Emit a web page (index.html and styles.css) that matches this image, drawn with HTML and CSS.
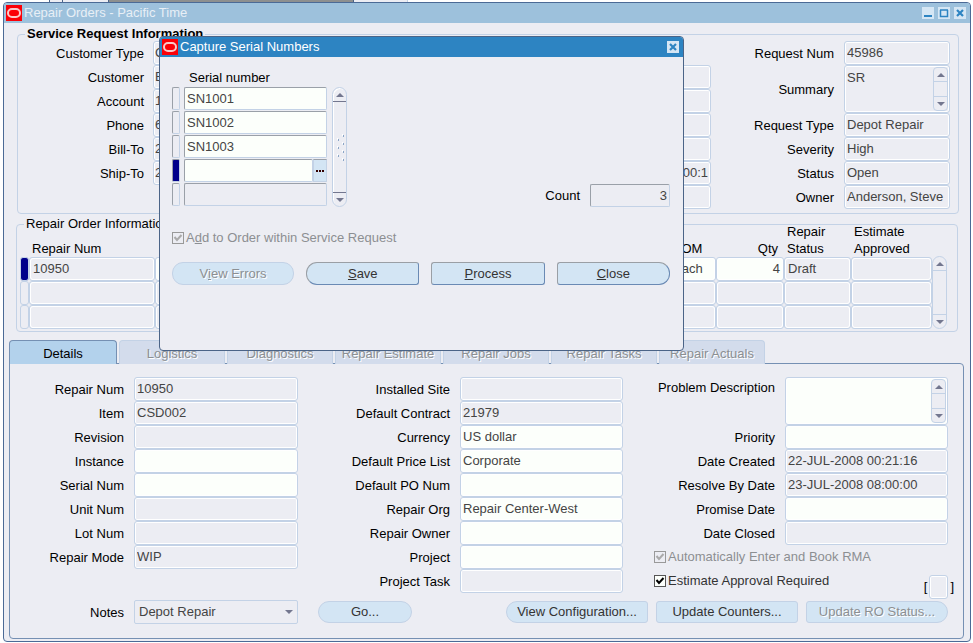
FILE: index.html
```html
<!DOCTYPE html>
<html lang="en">
<head>
    <meta charset="UTF-8">
    <meta name="viewport" content="width=device-width, initial-scale=1.0">
    <title>Repair Orders</title>
    <link rel="stylesheet" href="styles.css">
</head>
<body>
    <div class="backdrop"><span></span><span></span><span></span><span></span></div>

    <main class="window">
        <header class="titlebar">
            <svg class="logo" viewBox="0 0 16 16"><rect width="16" height="16" fill="#fb0007"/><rect x="2" y="4" width="12" height="8" rx="4" fill="none" stroke="#fbc9c9" stroke-width="2"/></svg>
            <h1>Repair Orders - Pacific Time</h1>
            <button class="win-btn" aria-label="Minimize"><svg viewBox="0 0 12 12"><path d="M2 9h8" stroke="#2d84c2" stroke-width="2"/></svg></button>
            <button class="win-btn" aria-label="Maximize"><svg viewBox="0 0 12 12"><path d="M2.500 3v6.500h7V3M2 3h8" fill="none" stroke="#2d84c2" stroke-width="1.500"/></svg></button>
            <button class="win-btn" aria-label="Close window"><svg viewBox="0 0 12 12"><path d="M3 3l6 6M9 3l-6 6" stroke="#2d84c2" stroke-width="2.200"/></svg></button>
        </header>

        <!-- Service request -->
        <fieldset class="group request">
            <legend class="bold">Service Request Information</legend>
            <div class="request-left">
                <div class="row"><label for="custType">Customer Type</label><input id="custType" class="field" value="C" readonly></div>
                <div class="row"><label for="customer">Customer</label><input id="customer" class="field" value="E" readonly></div>
                <div class="row"><label for="account">Account</label><input id="account" class="field" value="1" readonly></div>
                <div class="row"><label for="phone">Phone</label><input id="phone" class="field" value="6" readonly></div>
                <div class="row"><label for="billTo">Bill-To</label><input id="billTo" class="field" value="2" readonly></div>
                <div class="row"><label for="shipTo">Ship-To</label><input id="shipTo" class="field" value="2" readonly></div>
            </div>
            <div class="request-mid">
                <input class="field" aria-label="Contact" readonly>
                <input class="field" aria-label="Contact phone" readonly>
                <input class="field" aria-label="Email" readonly>
                <input class="field" aria-label="Contract" readonly>
                <input class="field num" aria-label="Date" value="00:1" readonly>
                <input class="field" aria-label="Reference" readonly>
            </div>
            <div class="request-right">
                <div class="row"><label for="reqNum">Request Num</label><input id="reqNum" class="field" value="45986" readonly></div>
                <div class="row tall">
                    <label for="summary">Summary</label>
                    <div class="field area">
                        <textarea id="summary" readonly>SR</textarea>
                        <div class="scroll"><button class="up" aria-label="Scroll up"></button><button class="down" aria-label="Scroll down"></button></div>
                    </div>
                </div>
                <div class="row"><label for="reqType">Request Type</label><input id="reqType" class="field" value="Depot Repair" readonly></div>
                <div class="row"><label for="severity">Severity</label><input id="severity" class="field" value="High" readonly></div>
                <div class="row"><label for="status">Status</label><input id="status" class="field" value="Open" readonly></div>
                <div class="row"><label for="owner">Owner</label><input id="owner" class="field" value="Anderson, Steve" readonly></div>
            </div>
        </fieldset>

        <!-- Repair orders table -->
        <fieldset class="group orders">
            <legend>Repair Order Information</legend>
            <div class="orders-body">
                <table>
                    <colgroup><col class="c-mark"><col class="c-num"><col><col class="c-uom"><col class="c-qty"><col class="c-status"><col class="c-appr"></colgroup>
                    <thead>
                        <tr><th></th><th>Repair Num</th><th></th><th>UOM</th><th class="num">Qty</th><th>Repair<br>Status</th><th>Estimate<br>Approved</th></tr>
                    </thead>
                    <tbody>
                        <tr><td class="current"></td><td>10950</td><td class="edit"></td><td class="edit">Each</td><td class="edit num">4</td><td>Draft</td><td></td></tr>
                        <tr><td></td><td></td><td></td><td></td><td></td><td></td><td></td></tr>
                        <tr><td></td><td></td><td></td><td></td><td></td><td></td><td></td></tr>
                    </tbody>
                </table>
                <div class="scroll round"><button class="up" aria-label="Scroll up"></button><button class="down" aria-label="Scroll down"></button></div>
            </div>
        </fieldset>

        <nav class="tabs">
            <button class="tab active">Details</button>
            <button class="tab">Logistics</button>
            <button class="tab">Diagnostics</button>
            <button class="tab">Repair Estimate</button>
            <button class="tab">Repair Jobs</button>
            <button class="tab">Repair Tasks</button>
            <button class="tab">Repair Actuals</button>
        </nav>

        <!-- Details tab -->
        <section class="panel">
            <div class="details">
                <div>
                    <div class="row"><label for="repairNum">Repair Num</label><input id="repairNum" class="field" value="10950" readonly></div>
                    <div class="row"><label for="item">Item</label><input id="item" class="field" value="CSD002" readonly></div>
                    <div class="row"><label for="revision">Revision</label><input id="revision" class="field" readonly></div>
                    <div class="row"><label for="instance">Instance</label><input id="instance" class="field edit"></div>
                    <div class="row"><label for="serialNum">Serial Num</label><input id="serialNum" class="field edit"></div>
                    <div class="row"><label for="unitNum">Unit Num</label><input id="unitNum" class="field" readonly></div>
                    <div class="row"><label for="lotNum">Lot Num</label><input id="lotNum" class="field" readonly></div>
                    <div class="row"><label for="repairMode">Repair Mode</label><input id="repairMode" class="field" value="WIP" readonly></div>
                </div>
                <div>
                    <div class="row"><label for="site">Installed Site</label><input id="site" class="field" readonly></div>
                    <div class="row"><label for="contract">Default Contract</label><input id="contract" class="field" value="21979" readonly></div>
                    <div class="row"><label for="currency">Currency</label><input id="currency" class="field edit" value="US dollar"></div>
                    <div class="row"><label for="priceList">Default Price List</label><input id="priceList" class="field edit" value="Corporate"></div>
                    <div class="row"><label for="poNum">Default PO Num</label><input id="poNum" class="field edit"></div>
                    <div class="row"><label for="repairOrg">Repair Org</label><input id="repairOrg" class="field edit" value="Repair Center-West"></div>
                    <div class="row"><label for="repairOwner">Repair Owner</label><input id="repairOwner" class="field edit"></div>
                    <div class="row"><label for="project">Project</label><input id="project" class="field edit"></div>
                    <div class="row"><label for="projectTask">Project Task</label><input id="projectTask" class="field" readonly></div>
                </div>
                <div>
                    <div class="row tall top">
                        <label for="problem">Problem Description</label>
                        <div class="field area edit">
                            <textarea id="problem"></textarea>
                            <div class="scroll"><button class="up" aria-label="Scroll up"></button><button class="down" aria-label="Scroll down"></button></div>
                        </div>
                    </div>
                    <div class="row"><label for="priority">Priority</label><input id="priority" class="field edit"></div>
                    <div class="row"><label for="created">Date Created</label><input id="created" class="field" value="22-JUL-2008 00:21:16" readonly></div>
                    <div class="row"><label for="resolveBy">Resolve By Date</label><input id="resolveBy" class="field" value="23-JUL-2008 08:00:00" readonly></div>
                    <div class="row"><label for="promise">Promise Date</label><input id="promise" class="field edit"></div>
                    <div class="row"><label for="closed">Date Closed</label><input id="closed" class="field" readonly></div>
                    <div class="checks">
                        <div>
                            <label class="check disabled"><input type="checkbox" checked disabled>Automatically Enter and Book RMA</label>
                            <label class="check"><input type="checkbox" checked>Estimate Approval Required</label>
                        </div>
                        <label class="flex-field">[<input class="field" aria-label="Flexfield" readonly>]</label>
                    </div>
                </div>
            </div>
            <div class="actions">
                <div class="row">
                    <label for="notes">Notes</label>
                    <select id="notes"><option>Depot Repair</option></select>
                </div>
                <button class="btn go">Go...</button>
                <div class="btn-group">
                    <button class="btn first">View Configuration...</button>
                    <button class="btn">Update Counters...</button>
                    <button class="btn last" disabled>Update RO Status...</button>
                </div>
            </div>
        </section>

        <!-- Serial number dialog -->
        <section class="dialog" role="dialog" aria-label="Capture Serial Numbers">
            <header class="titlebar">
                <svg class="logo" viewBox="0 0 16 16"><rect width="16" height="16" fill="#fb0007"/><rect x="2" y="4" width="12" height="8" rx="4" fill="none" stroke="#fbc9c9" stroke-width="2"/></svg>
                <h2>Capture Serial Numbers</h2>
                <button class="win-btn" aria-label="Close dialog"><svg viewBox="0 0 12 12"><path d="M3 3l6 6M9 3l-6 6" stroke="#2d84c2" stroke-width="2.200"/></svg></button>
            </header>
            <div class="dialog-body">
                <div class="serial-title">Serial number</div>
                <div class="serials">
                    <div class="serial-list">
                        <div class="serial"><i></i><input class="inset edit" aria-label="Serial 1" value="SN1001"></div>
                        <div class="serial"><i></i><input class="inset edit" aria-label="Serial 2" value="SN1002"></div>
                        <div class="serial"><i></i><input class="inset edit" aria-label="Serial 3" value="SN1003"></div>
                        <div class="serial"><i class="current"></i><input class="inset edit" aria-label="Serial 4"><button class="lov" aria-label="List of values"><svg viewBox="0 0 8 2"><path d="M0 1h2M3 1h2M6 1h2" stroke="#300" stroke-width="2"/></svg></button></div>
                        <div class="serial"><i></i><input class="inset" aria-label="Serial 5" readonly></div>
                    </div>
                    <div class="scroll round thumb">
                        <button class="up" aria-label="Scroll up"></button>
                        <svg class="grip" viewBox="0 0 8 27"><path d="M6 1h1M1 5h1M6 9h1M1 13h1M6 17h1M1 21h1M6 25h1" stroke="#fff" stroke-width="2"/><path d="M7 2h1M2 6h1M7 10h1M2 14h1M7 18h1M2 22h1M7 26h1" stroke="#8ba5c6" stroke-width="2"/></svg>
                        <button class="down" aria-label="Scroll down"></button>
                    </div>
                    <div class="count"><label for="count">Count</label><input id="count" class="inset num" value="3" readonly></div>
                </div>
                <label class="check disabled"><input type="checkbox" checked disabled><span>A<u>d</u>d to Order within Service Request</span></label>
                <div class="dialog-buttons">
                    <button class="btn first last" disabled>V<u>i</u>ew Errors</button>
                    <button class="btn raised first"><u>S</u>ave</button>
                    <button class="btn raised"><u>P</u>rocess</button>
                    <button class="btn raised last"><u>C</u>lose</button>
                </div>
            </div>
        </section>
    </main>
</body>
</html>
```

FILE: styles.css
```css
* {
    box-sizing: border-box;
}

body {
    margin: 0;
    background-color: #fff;
    font-family: "Liberation Sans", Arial, sans-serif;
    font-size: 13px;
    line-height: 18px;
    color: #000;
}

input, textarea, select, button {
    font: inherit;
    color: #444;
    margin: 0;
    padding: 0;
    min-width: 0;
}

/* Edge of the windows behind this one */
.backdrop {
    display: flex;
    height: 2px;
    padding-left: 49px;
}

.backdrop span {
    border-left: 1px solid #4b6487;
    background-color: #ecedf3;
    width: 13px;
}

.backdrop span:nth-child(2) {
    width: 46px;
}

.backdrop span:nth-child(3) {
    width: 245px;
    background-color: #8d8f8f;
}

.backdrop span:nth-child(4) {
    width: 55px;
    border-right: 1px solid #c3d2e6;
}

.window {
    position: relative;
    margin: 0 2px 0 3px;
    border: 1px solid #4b6a96;
    border-radius: 4px;
    background-color: #ecedf3;
    padding-bottom: 2px;
}

.titlebar {
    display: flex;
    align-items: center;
    height: 20px;
    padding: 0 4px 0 2px;
    gap: 4px;
    background-color: #9dc1dc;
    border-radius: 3px 3px 0 0;
}

.titlebar h1,
.titlebar h2 {
    flex: 1;
    margin: 0 0 0 -2px;
    font-size: 13px;
    font-weight: normal;
    color: #e8eff6;
}

.logo {
    width: 16px;
    height: 16px;
}

.win-btn {
    width: 12px;
    height: 12px;
    border: 0;
    background-color: #d5e6f4;
}

.win-btn svg {
    display: block;
}

/* Groups */
.group {
    margin: 0 11px 0 13px;
    padding: 0;
    min-width: 0;
    border: 1px solid #c3d2e6;
    border-radius: 4px;
}

.group legend {
    margin-left: 7px;
    padding: 0 2px;
    line-height: 14px;
}

.bold {
    font-weight: bold;
}

.request {
    display: flex;
    margin-top: 4px;
    padding: 0 8px 4px 0;
}

.request-left {
    width: 236px;
}

.request-mid {
    flex: 1;
    display: flex;
    flex-direction: column;
    justify-content: flex-end;
    margin-left: 160px;
    padding-top: 24px;
}

.request-right {
    width: 239px;
}

.row {
    display: flex;
    align-items: center;
    height: 24px;
}

.row label {
    flex: 1;
    padding: 2px 10px 0 0;
    text-align: right;
    white-space: nowrap;
}

.tall {
    height: 48px;
}

.top {
    align-items: flex-start;
}

.field {
    width: 163px;
    height: 24px;
    padding: 0 2px 1px;
    border: 1px solid #c3d2e6;
    border-radius: 3px;
    background-color: #ecedf3;
    box-shadow: inset 0 0 0 1px #fff;
}

.request-left .row label {
    padding-right: 9px;
}

.request-left .field {
    width: 101px;
    padding-left: 1px;
}

.request-mid .field {
    width: 100%;
}

.request-right .field {
    width: 106px;
}

.field.edit,
.edit {
    background-color: #fcfffb;
}

.num {
    text-align: right;
}

.area {
    display: flex;
    height: 48px;
    padding: 1px;
}

.area textarea {
    flex: 1;
    width: 0;
    border: 0;
    padding: 2px 1px;
    background: transparent;
    resize: none;
    overflow: hidden;
}

/* Scrollbars */
.scroll {
    display: flex;
    flex-direction: column;
    justify-content: space-between;
    width: 15px;
    border: 1px solid #c3d2e6;
    border-radius: 4px;
    background-color: #ecedf3;
    overflow: hidden;
}

.scroll button {
    display: flex;
    align-items: center;
    justify-content: center;
    height: 14px;
    border: 0;
    background: transparent;
}

.scroll button::before {
    content: "";
    border: 4px solid transparent;
}

.scroll .up {
    border-bottom: 1px solid #c3d2e6;
}

.scroll .down {
    border-top: 1px solid #c3d2e6;
}

.scroll .up::before {
    border-top: 0;
    border-bottom-color: #73778f;
}

.scroll .down::before {
    border-bottom: 0;
    border-top-color: #73778f;
}

.round {
    border-radius: 8px;
}

.thumb {
    align-items: stretch;
    box-shadow: inset 1px 1px 0 #fff;
}

.thumb .up {
    border-bottom-color: #73778f;
}

.thumb .down {
    border-top-color: #73778f;
}

.grip {
    width: 8px;
    height: 27px;
    align-self: center;
}

/* Repair orders */
.orders {
    margin: 3px 12px 0;
    padding: 0 10px 2px 3px;
}

.orders legend {
    margin-left: 4px;
}

.orders-body {
    display: flex;
    align-items: flex-end;
    margin-top: -8px;
}

.orders-body .scroll {
    height: 73px;
}

.orders table {
    flex: 1;
    table-layout: fixed;
    border-collapse: separate;
    border-spacing: 0;
    width: 0;
}

.orders th {
    padding: 0 3px;
    font-weight: normal;
    line-height: 17px;
    text-align: left;
    vertical-align: bottom;
    white-space: nowrap;
}

.orders th.num {
    padding-right: 6px;
    text-align: right;
}

.orders td {
    height: 24px;
    padding: 0 3px;
    border: 1px solid #c3d2e6;
    border-radius: 3px;
    box-shadow: inset 0 0 0 1px #fff;
    color: #444;
}

.orders td:first-child {
    box-shadow: none;
}

.orders td.current {
    background-color: #00008b;
}

.c-mark { width: 9px; }
.c-num { width: 126px; }
.c-uom { width: 47px; }
.c-qty { width: 68px; }
.c-status { width: 67px; }
.c-appr { width: 81px; }

/* Tabs */
.tabs {
    display: flex;
    gap: 2px;
    margin: 8px 0 0 5px;
}

.tab {
    width: 106px;
    height: 24px;
    padding-top: 2px;
    border: 1px solid #c3d2e6;
    border-bottom: 0;
    border-radius: 4px 4px 0 0;
    background-color: #d3dcec;
    color: #8c8f92;
    text-shadow: 1px 1px 0 #fff;
    white-space: nowrap;
}

.tab.active {
    width: 108px;
    border-color: #7590b3;
    background-color: #b3d2ec;
    color: #000;
    text-shadow: none;
}

.panel {
    margin: -1px 6px 0 5px;
    padding: 13px 15px 14px 0;
    border: 1px solid #7590b3;
    border-radius: 0 4px 4px 4px;
}

.details {
    display: grid;
    grid-template-columns: 288fr 325fr 325fr;
}

.details > :first-child .field {
    width: 164px;
}

.checks {
    display: flex;
    justify-content: space-between;
    margin-left: 31px;
    height: 48px;
}

.checks .check {
    height: 24px;
}

.check {
    display: flex;
    align-items: center;
    gap: 2px;
    color: #333;
    white-space: nowrap;
}

.check input {
    appearance: none;
    width: 12px;
    height: 12px;
    border: 1px solid #555;
    background: #fcfffb url("data:image/svg+xml,%3Csvg xmlns='http://www.w3.org/2000/svg' viewBox='0 0 10 10'%3E%3Cpath d='M1.500 4l2.500 3 4.500-5' fill='none' stroke='%23000' stroke-width='2'/%3E%3C/svg%3E");
}

.check.disabled {
    color: #8c8f92;
}

.check.disabled input {
    border-color: #999;
    background: #ecedf3 url("data:image/svg+xml,%3Csvg xmlns='http://www.w3.org/2000/svg' viewBox='0 0 10 10'%3E%3Cpath d='M1.500 4l2.500 3 4.500-5' fill='none' stroke='%23aaa' stroke-width='2'/%3E%3C/svg%3E");
}

.flex-field {
    display: flex;
    align-items: center;
    align-self: flex-end;
    gap: 2px;
    margin: 0 -6px -6px 0;
}

.flex-field .field {
    width: 19px;
}

/* Buttons */
.actions {
    display: flex;
    align-items: center;
    padding-top: 7px;
}

.actions .row {
    width: 288px;
}

.actions select {
    appearance: none;
    width: 164px;
    height: 24px;
    padding: 0 4px;
    border: 1px solid #c3d2e6;
    border-radius: 2px;
    background: #ecedf3 url("data:image/svg+xml,%3Csvg xmlns='http://www.w3.org/2000/svg' width='8' height='4'%3E%3Cpath d='M0 0h8L4 4z' fill='%2373778f'/%3E%3C/svg%3E") no-repeat right 4px center;
}

.btn {
    height: 22px;
    border: 1px solid #c3d2e6;
    border-radius: 3px;
    background-color: #d3e5f4;
    color: #333;
    white-space: nowrap;
}

.btn:disabled {
    color: #8c8f92;
    text-shadow: 1px 1px 0 #fff;
}

.btn.first {
    border-top-left-radius: 11px;
    border-bottom-left-radius: 11px;
}

.btn.last {
    border-top-right-radius: 11px;
    border-bottom-right-radius: 11px;
}

.go {
    width: 94px;
    margin-left: 20px;
    border-radius: 11px;
}

.btn-group {
    display: flex;
    gap: 8px;
    margin-left: auto;
}

.btn-group .btn {
    width: 142px;
}

.raised {
    border-color: #9a9fa5 #6a8ab4 #6a8ab4 #9a9fa5;
}

/* Dialog */
.dialog {
    position: absolute;
    left: 155px;
    top: 33px;
    width: 525px;
    height: 315px;
    border: 1px solid #4b6487;
    border-radius: 4px;
    background-color: #ecedf3;
}

.dialog .titlebar {
    background-color: #2d84c2;
}

.dialog h2 {
    color: #fff;
}

.dialog-body {
    padding: 12px 13px 0 12px;
}

.serial-title {
    padding-left: 17px;
}

.serials {
    display: flex;
    align-items: flex-start;
}

.serial-list {
    width: 155px;
}

.serial {
    display: flex;
    height: 23px;
    margin-bottom: 1px;
}

.serial i {
    width: 8px;
    margin-right: 4px;
    border: 1px solid #c3d2e6;
    border-color: #9aa0a8 #c3d2e6 #c3d2e6 #9aa0a8;
    border-radius: 2px;
}

.serial i.current {
    background-color: #00008b;
}

.serial .inset {
    flex: 1;
    width: 0;
}

.inset {
    height: 23px;
    padding: 0 2px;
    border: 1px solid;
    border-color: #9aa0a8 #c3d2e6 #c3d2e6 #9aa0a8;
    border-radius: 2px;
}

.inset:read-only {
    background-color: #ecedf3;
}

.lov {
    display: flex;
    align-items: center;
    justify-content: center;
    width: 14px;
    border: 1px solid #c3d2e6;
    border-top-color: #9aa0a8;
    background-color: #d3e5f4;
}

.lov svg {
    width: 8px;
    height: 2px;
}

.serials .scroll {
    height: 120px;
    margin-left: 5px;
}

.count {
    display: flex;
    align-items: center;
    align-self: flex-end;
    gap: 10px;
    margin-left: auto;
}

.count .inset {
    width: 80px;
}

.dialog-body > .check {
    margin-top: 22px;
}

.dialog-buttons {
    display: flex;
    gap: 12px;
    margin-top: 15px;
}

.dialog-buttons .btn {
    flex: 113;
    height: 23px;
}

.dialog-buttons .btn:first-child {
    flex: 122;
}
```
